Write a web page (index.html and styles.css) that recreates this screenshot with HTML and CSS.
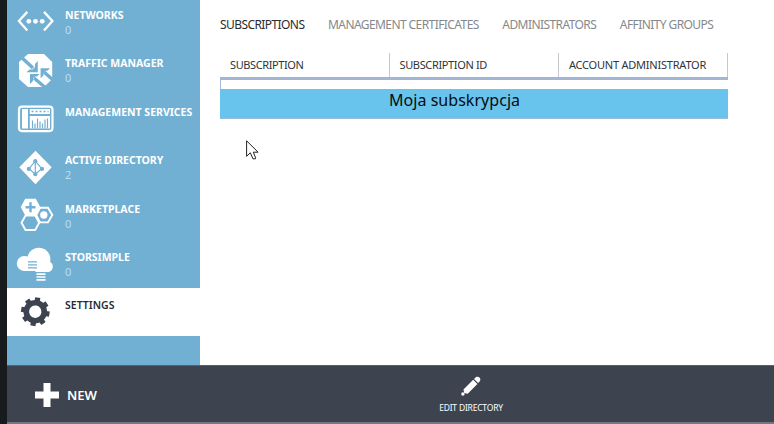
FILE: index.html
```html
<!DOCTYPE html>
<html lang="en">
<head>
<meta charset="utf-8">
<title>Settings</title>
<link rel="stylesheet" href="styles.css">
</head>
<body>
<div class="app">
  <div class="workspace">
    <nav class="sidebar">
      <a class="item">
        <svg class="icon" viewBox="16 -2.4 40 48.4"><g fill="none" stroke="#fff" stroke-width="2.3"><path d="M27.3 11.5 18.9 20.7l8.4 9.4M44 11.5l8.4 9.2L44 30.1"/></g><g fill="#fff"><circle cx="28.8" cy="20.9" r="2.4"/><circle cx="35.5" cy="20.9" r="2.4"/><circle cx="42.2" cy="20.9" r="2.4"/></g></svg>
        <div class="label"><span>NETWORKS</span><small>0</small></div>
      </a>
      <a class="item">
        <svg class="icon" viewBox="16 46 40 48.4"><path fill="#fff" d="M28 54h16l8.2 8v17l-8.2 8H28l-9-8V62z"/><path stroke="#72b0d3" stroke-width="3.4" d="m20 56 13 12M53 80 44 72M47 89 34 78"/><path fill="#72b0d3" d="M37.8 61v11.2H26.500l3-2.700h3l2.500-2.500v-3zM40.600 68.300h9.400l-2.500 2.500h-2l-2 2v2.500l-2.900 2.900zM30 74h9.500l-2.500 2.500h-2l-2 2v2.500L30 84z"/></svg>
        <div class="label"><span>TRAFFIC MANAGER</span><small>0</small></div>
      </a>
      <a class="item">
        <svg class="icon" viewBox="16 94.4 40 48.4"><rect x="19" y="107" width="33.5" height="24.5" rx="3" fill="none" stroke="#fff" stroke-width="2.2"/><path fill="#fff" d="M22 109.500h6v19.500h-6zM29.800 109.500h20.200v5H29.800zM29.800 116.500H50V129H29.800z"/><path stroke="#72b0d3" stroke-width="1.2" d="M32.500 121v8M35 124v5M37.500 119v10M40 122v7M42.500 124v5M45 120v9M47.500 119v10"/><path stroke="#72b0d3" stroke-width="1.500" stroke-dasharray="2 2" d="M31.500 112h17"/></svg>
        <div class="label"><span>MANAGEMENT SERVICES</span></div>
      </a>
      <a class="item">
        <svg class="icon" viewBox="16 142.8 40 48.4"><path fill="#fff" d="m35.500 150.500 16.200 16.500-16.200 17-16.200-17z"/><path fill="none" stroke="#72b0d3" stroke-width="1.200" d="m35.300 161-6.300 7.500 6.300 5.500 6.500-5.500zM35.300 161v13"/><g fill="#72b0d3"><circle cx="35.300" cy="161" r="2.100"/><circle cx="28.800" cy="168.700" r="2.100"/><circle cx="42" cy="168.700" r="2.100"/><circle cx="35.300" cy="174" r="2.100"/></g></svg>
        <div class="label"><span>ACTIVE DIRECTORY</span><small>2</small></div>
      </a>
      <a class="item">
        <svg class="icon" viewBox="16 191.2 40 48.4"><g stroke="#fff" stroke-width="1.900"><path fill="#fff" d="M25.800 200h9.400l4 7.300-4 7.500h-9.400l-4-7.500z"/><path fill="none" d="M25.500 215.800h9.700l4 7.200-4 7.200h-9.700l-4-7.200zM40 208h8l4.300 7.300-4.300 7.300h-8l-3.700-7.300z"/></g><path stroke="#72b0d3" stroke-width="2.400" d="M30.500 202.500v10M25.500 207.500h10"/><circle cx="43.800" cy="215.200" r="3.700" fill="#fff"/></svg>
        <div class="label"><span>MARKETPLACE</span><small>0</small></div>
      </a>
      <a class="item">
        <svg class="icon" viewBox="16 239.6 40 48.4"><path fill="#fff" d="M24 270.500a7.300 7.300 0 0 1 .5-15c1.200 0 2.200.2 3.200.6a11.500 11.500 0 0 1 22-1.200c.8 2.300.8 4.500.4 6.500a5.700 5.700 0 0 1-1.300 10.300H35.500v-1.200z"/><path stroke="#72b0d3" stroke-width="1.300" d="M28 261.500h9M28 264.500h9M28 267.500h9"/><path stroke="#fff" stroke-width="1.600" d="M36.500 273.700h9M36.500 276.600h9M36.500 279.500h9"/></svg>
        <div class="label"><span>STORSIMPLE</span><small>0</small></div>
      </a>
      <a class="item selected">
        <svg class="icon" viewBox="16 288 40 48.4"><g transform="translate(35.300 311.700) rotate(10)"><circle r="9" fill="none" stroke="#3d444f" stroke-width="5.600"/><path stroke="#3d444f" stroke-width="5.200" d="M0-14.300v4M0 14.300v-4M-14.300 0h4M14.300 0h-4M-10.100-10.100l3 3M10.100 10.100l-3-3M-10.100 10.100l3-3M10.100-10.100l-3 3"/></g></svg>
        <div class="label"><span>SETTINGS</span></div>
      </a>
    </nav>
    <main class="content">
      <div class="tabs"><span class="active">SUBSCRIPTIONS</span><span>MANAGEMENT CERTIFICATES</span><span>ADMINISTRATORS</span><span>AFFINITY GROUPS</span></div>
      <div class="table">
        <div class="head"><div class="h-sub">SUBSCRIPTION</div><div class="h-id">SUBSCRIPTION ID</div><div class="h-account">ACCOUNT ADMINISTRATOR</div></div>
        <div class="spacer"></div>
        <div class="row"><span>Moja subskrypcja</span></div>
      </div>
      <svg class="cursor" viewBox="0 0 13 20"><path fill="#fff" stroke="#222" d="M.6.800v15.500l3.700-3.500 2.700 6h2.400l.2-1-2.300-5.600h4.800z"/></svg>
    </main>
  </div>
  <footer class="bar">
    <div class="new"><svg viewBox="0 0 24 24"><path fill="#fff" d="M8.500 0h7v8.500H24v7h-8.500V24h-7v-8.500H0v-7h8.500z"/></svg><span>NEW</span></div>
    <div class="edit"><svg viewBox="0 0 20 20"><path fill="#fff" d="m2.500 13.500 9.700-9.700 4.200 4.200-9.700 9.700-3.500-.7zM13 3l1.800-1.800c1.200-.9 2.800-.5 3.700.4.900.9 1.200 2.400.3 3.600L17.100 7z"/><circle cx="1.900" cy="18" r="1.700" fill="#fff"/></svg><span>EDIT DIRECTORY</span></div>
  </footer>
</div>
</body>
</html>
```
FILE: styles.css
```css
* { box-sizing: border-box; }
body { margin: 0; background: #fff; font-family: "Noto Sans", "Open Sans", sans-serif; }
.app { width: 774px; height: 424px; overflow: hidden; border-left: 7px solid #171b1c; display: flex; flex-direction: column; }
.workspace { display: flex; height: 365px; overflow: hidden; }
.sidebar { width: 193px; background: #72b0d3; flex: none; }
.item { display: flex; height: 48.4px; padding-left: 9px; gap: 9px; color: #fff; }
.item:first-child { margin-top: -2.4px; }
.icon { width: 40px; height: 48.4px; flex: none; }
.label { padding-top: 10.4px; font-size: 10.5px; line-height: 14px; font-weight: 700; white-space: nowrap; }
.label span { display: block; }
.label small { display: block; font-size: 11px; font-weight: 400; line-height: 15px; color: #b9ddf1; }
.selected { background: #fff; color: #272c33; }
.selected .label { font-weight: 600; }
.content { flex: 1; padding: 17px 0 0 20px; }
.tabs { display: flex; gap: 23.6px; height: 36px; font-size: 12px; line-height: 16px; letter-spacing: -.58px; color: #85888b; white-space: nowrap; }
.tabs .active { color: #292c30; }
.table { width: 508px; }
.head { display: grid; grid-template-columns: 169.5px 169.5px 169px; height: 27px; border-bottom: 3px solid #a3b5d5; font-size: 11px; line-height: 24px; color: #303338; white-space: nowrap; }
.head div { padding-left: 10px; border-right: 1px solid #c5c8ce; }
.h-sub { letter-spacing: -.4px; }
.h-id { letter-spacing: -.36px; }
.h-account { letter-spacing: -.22px; }
.spacer { height: 9px; border-left: 1px solid #a9b6d1; }
.row { height: 30px; background: #69c4ed; border-bottom: 1px solid #9dbbdc; padding-left: 169px; font-size: 16px; line-height: 22px; letter-spacing: .04px; color: #080b0d; white-space: nowrap; }
.cursor { display: block; width: 13px; height: 20px; margin: 21px 0 0 26px; }
.bar { display: flex; height: 59px; background: #3d444f; border-top: 1px solid #596069; border-bottom: 2px solid #73777e; color: #fff; }
.new { display: flex; align-items: center; width: 400px; padding-left: 28px; gap: 8px; font-size: 13px; font-weight: 600; padding-top: 1px; }
.new svg { width: 24px; height: 24px; }
.edit { width: 128px; display: flex; flex-direction: column; align-items: center; padding-top: 10px; font-size: 8.5px; line-height: 12px; letter-spacing: -.2px; }
.edit svg { width: 20px; height: 20px; margin-bottom: 6px; }
```
